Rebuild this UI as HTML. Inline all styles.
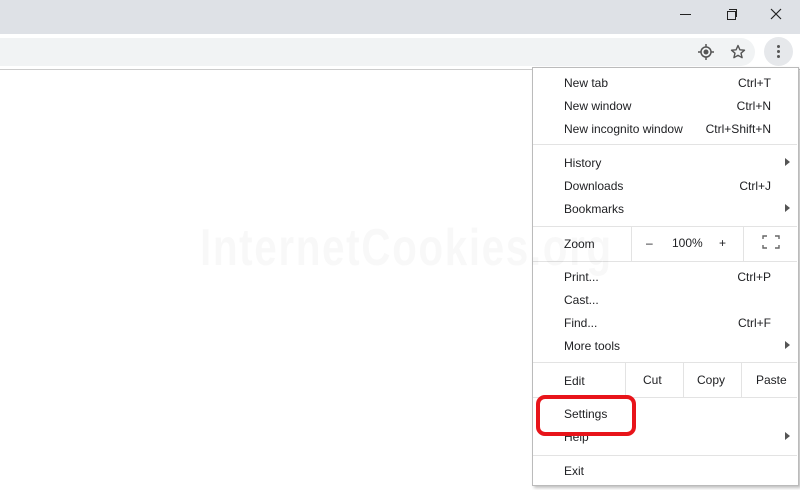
<!DOCTYPE html>
<html><head><style>
body{margin:0;width:800px;height:490px;background:#fff;position:relative;overflow:hidden;font-family:"Liberation Sans",sans-serif;font-size:12px;color:#202124}
.a{position:absolute}
.t{position:absolute;left:564px;line-height:14px}
.s{position:absolute;right:29px;line-height:14px}
.arr{position:absolute;left:785px;width:0;height:0;border-left:5px solid #555;border-top:4px solid transparent;border-bottom:4px solid transparent}
.hr{position:absolute;left:533px;width:264px;height:1px;background:#e3e3e3}
.vr{position:absolute;width:1px;background:#e3e3e3}
</style></head><body>
<div class="a" style="left:0;top:0;width:800px;height:34px;background:#dee1e6"></div>
<div class="a" style="left:680px;top:14px;width:11px;height:1px;background:#222"></div>
<div class="a" style="left:727px;top:11px;width:7px;height:7px;border:1px solid #222"></div>
<div class="a" style="left:729px;top:9px;width:7px;height:7px;border-top:1px solid #222;border-right:1px solid #222"></div>
<svg class="a" style="left:770px;top:8px" width="12" height="12"><path d="M1 1L11 11M11 1L1 11" stroke="#222" stroke-width="1.2"/></svg>
<div class="a" style="left:0;top:34px;width:800px;height:35px;background:#fff"></div>
<div class="a" style="left:0;top:38px;width:755px;height:28px;background:#f1f3f4;border-radius:0 14px 14px 0"></div>
<div class="a" style="left:0;top:69px;width:800px;height:1px;background:#ccc"></div>
<svg class="a" style="left:698px;top:44px" width="16" height="16"><circle cx="8" cy="8" r="5" fill="none" stroke="#555" stroke-width="1.5"/><circle cx="8" cy="8" r="2.5" fill="#555"/><path d="M8 0v3M8 13v3M0 8h3M13 8h3" stroke="#555" stroke-width="1.5"/></svg>
<svg class="a" style="left:730px;top:44px" width="16" height="16"><path d="M8 1.5l1.9 4.3 4.6.4-3.5 3 1.1 4.5L8 11.3 3.9 13.7 5 9.2 1.5 6.2l4.6-.4z" fill="none" stroke="#555" stroke-width="1.4" stroke-linejoin="round"/></svg>
<div class="a" style="left:764px;top:37px;width:29px;height:29px;border-radius:50%;background:#e6e8eb"></div>
<div class="a" style="left:777px;top:45px;width:3px;height:3px;border-radius:50%;background:#555;box-shadow:0 5px 0 #555,0 10px 0 #555"></div>
<div class="a" style="left:532px;top:67px;width:265px;height:417px;background:#fff;border:1px solid #bbb;box-shadow:2px 2px 3px rgba(0,0,0,.25)"></div>
<div class="t" style="top:76px">New tab</div><div class="s" style="top:76px">Ctrl+T</div>
<div class="t" style="top:99px">New window</div><div class="s" style="top:99px">Ctrl+N</div>
<div class="t" style="top:122px">New incognito window</div><div class="s" style="top:122px">Ctrl+Shift+N</div>
<div class="hr" style="top:144px"></div>
<div class="t" style="top:156px">History</div><div class="arr" style="top:158px"></div>
<div class="t" style="top:179px">Downloads</div><div class="s" style="top:179px">Ctrl+J</div>
<div class="t" style="top:202px">Bookmarks</div><div class="arr" style="top:204px"></div>
<div class="hr" style="top:226px"></div>
<div class="t" style="top:237px">Zoom</div>
<div class="vr" style="left:631px;top:226px;height:35px"></div>
<div class="vr" style="left:743px;top:226px;height:35px"></div>
<div class="a" style="left:646px;top:236px">–</div>
<div class="a" style="left:672px;top:236px">100%</div>
<div class="a" style="left:719px;top:236px">+</div>
<svg class="a" style="left:762px;top:235px" width="18" height="14"><path d="M1 4V1h4M13 1h4v3M17 10v3h-4M5 13H1v-3" fill="none" stroke="#666" stroke-width="1.4"/></svg>
<div class="hr" style="top:261px"></div>
<div class="t" style="top:270px">Print...</div><div class="s" style="top:270px">Ctrl+P</div>
<div class="t" style="top:293px">Cast...</div>
<div class="t" style="top:316px">Find...</div><div class="s" style="top:316px">Ctrl+F</div>
<div class="t" style="top:339px">More tools</div><div class="arr" style="top:341px"></div>
<div class="hr" style="top:362px"></div>
<div class="t" style="top:374px">Edit</div>
<div class="vr" style="left:625px;top:362px;height:35px"></div>
<div class="vr" style="left:683px;top:362px;height:35px"></div>
<div class="vr" style="left:741px;top:362px;height:35px"></div>
<div class="a" style="left:643px;top:373px">Cut</div>
<div class="a" style="left:697px;top:373px">Copy</div>
<div class="a" style="left:756px;top:373px">Paste</div>
<div class="hr" style="top:397px"></div>
<div class="t" style="top:407px">Settings</div>
<div class="t" style="top:430px">Help</div><div class="arr" style="top:432px"></div>
<div class="hr" style="top:455px"></div>
<div class="t" style="top:464px">Exit</div>
<div class="a" style="left:200px;top:218px;font-size:52px;font-weight:bold;color:#000;opacity:0.025;letter-spacing:2px;transform:scaleX(0.78);transform-origin:0 0;white-space:nowrap">InternetCookies.org</div>
<div class="a" style="left:536px;top:395px;width:92px;height:33px;border:4px solid #e8141a;border-radius:9px"></div>
</body></html>
